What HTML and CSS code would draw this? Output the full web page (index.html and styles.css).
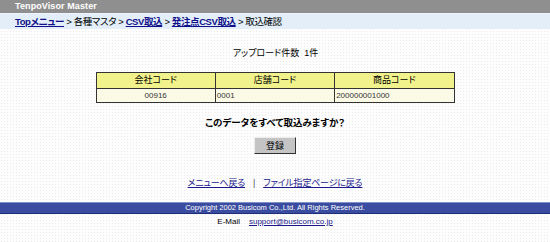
FILE: index.html
```html
<!DOCTYPE html>
<html lang="ja">
<head>
    <meta charset="utf-8">
    <title>TenpoVisor Master</title>
    <link rel="stylesheet" href="styles.css">
</head>
<body>
    <div class="title_bar">TenpoVisor Master</div>
    <div class="crumb_bar">
        <a href="#">Topメニュー</a> &gt; 各種マスタ &gt; <a href="#">CSV取込</a> &gt; <a href="#">発注点CSV取込</a> &gt; 取込確認
    </div>

    <div class="main">
        <p class="count">アップロード件数&nbsp;&nbsp;1件</p>
        <table class="data_table">
            <tr>
                <th>会社コード</th>
                <th>店舗コード</th>
                <th>商品コード</th>
            </tr>
            <tr>
                <td class="center">00916</td>
                <td>0001</td>
                <td>200000001000</td>
            </tr>
        </table>
        <p class="question">このデータをすべて取込みますか？</p>
        <button type="button" class="btn">登録</button>
        <div class="links">
            <a href="#">メニューへ戻る</a>
            <span class="sep">|</span>
            <a href="#">ファイル指定ページに戻る</a>
        </div>
    </div>

    <div class="footer_bar">Copyright 2002 Busicom Co.,Ltd. All Rights Reserved.</div>
    <div class="mail">E-Mail<a href="#">support@busicom.co.jp</a></div>
</body>
</html>
```

FILE: styles.css
```css
body {
    margin: 0;
    background-color: #fdfdfd;
    background-image: radial-gradient(#ececec 0.6px, transparent 0.7px);
    background-size: 3px 3px;
    font-family: "Liberation Sans", "Noto Sans CJK JP", sans-serif;
    font-size: 9px;
    line-height: 13px;
    color: #000;
    font-feature-settings: "palt";
}
a {
    color: #1a1a8c;
}
.title_bar {
    height: 13px;
    line-height: 13px;
    background-color: #8f8f8f;
    color: #fff;
    font-weight: bold;
    font-size: 9px;
    padding-left: 15px;
    letter-spacing: 0.1px;
}
.crumb_bar {
    height: 15px;
    line-height: 15px;
    background-color: #e3eef8;
    padding-left: 15px;
    font-size: 9.5px;
    letter-spacing: -0.4px;
    border-top: 1px solid #eef4fb;
}
.crumb_bar a {
    color: #10108a;
    font-weight: bold;
}
.main {
    display: flex;
    flex-direction: column;
    align-items: center;
}
.count {
    margin: 18px 0 12px 0;
    padding-left: 1px;
    font-size: 9px;
}
.data_table {
    width: 359px;
    border-collapse: collapse;
    font-size: 9px;
}
.data_table th {
    width: 33.3%;
    background-color: #f2f28c;
    font-weight: normal;
    height: 15px;
    padding: 0;
    border: 1px solid #333;
}
.data_table td {
    background-color: #fafae6;
    height: 13px;
    padding: 0 1px;
    border: 1px solid #333;
    color: #333;
    font-size: 8px;
}
.data_table td.center {
    text-align: center;
}
.question {
    margin: 13px 0 8px 0;
    font-size: 9.5px;
    font-weight: bold;
}
.btn {
    width: 42px;
    height: 17px;
    padding: 0;
    font-family: inherit;
    font-size: 9px;
    background-color: #c4c4c4;
    border: 1px solid;
    border-color: #eee #333 #333 #eee;
}
.links {
    margin-top: 23px;
    display: flex;
    gap: 8px;
    font-size: 9px;
    letter-spacing: -0.2px;
}
.links .sep {
    color: #555;
}
.footer_bar {
    margin-top: 12px;
    height: 10px;
    line-height: 10px;
    background-color: #3a4ca0;
    border-top: 1px solid #8090c8;
    border-bottom: 1px solid #1e2e78;
    color: #fff;
    text-align: center;
    font-size: 7.5px;
}
.mail {
    text-align: center;
    margin-top: 1px;
    font-size: 8px;
}
.mail a {
    margin-left: 9px;
}
```
